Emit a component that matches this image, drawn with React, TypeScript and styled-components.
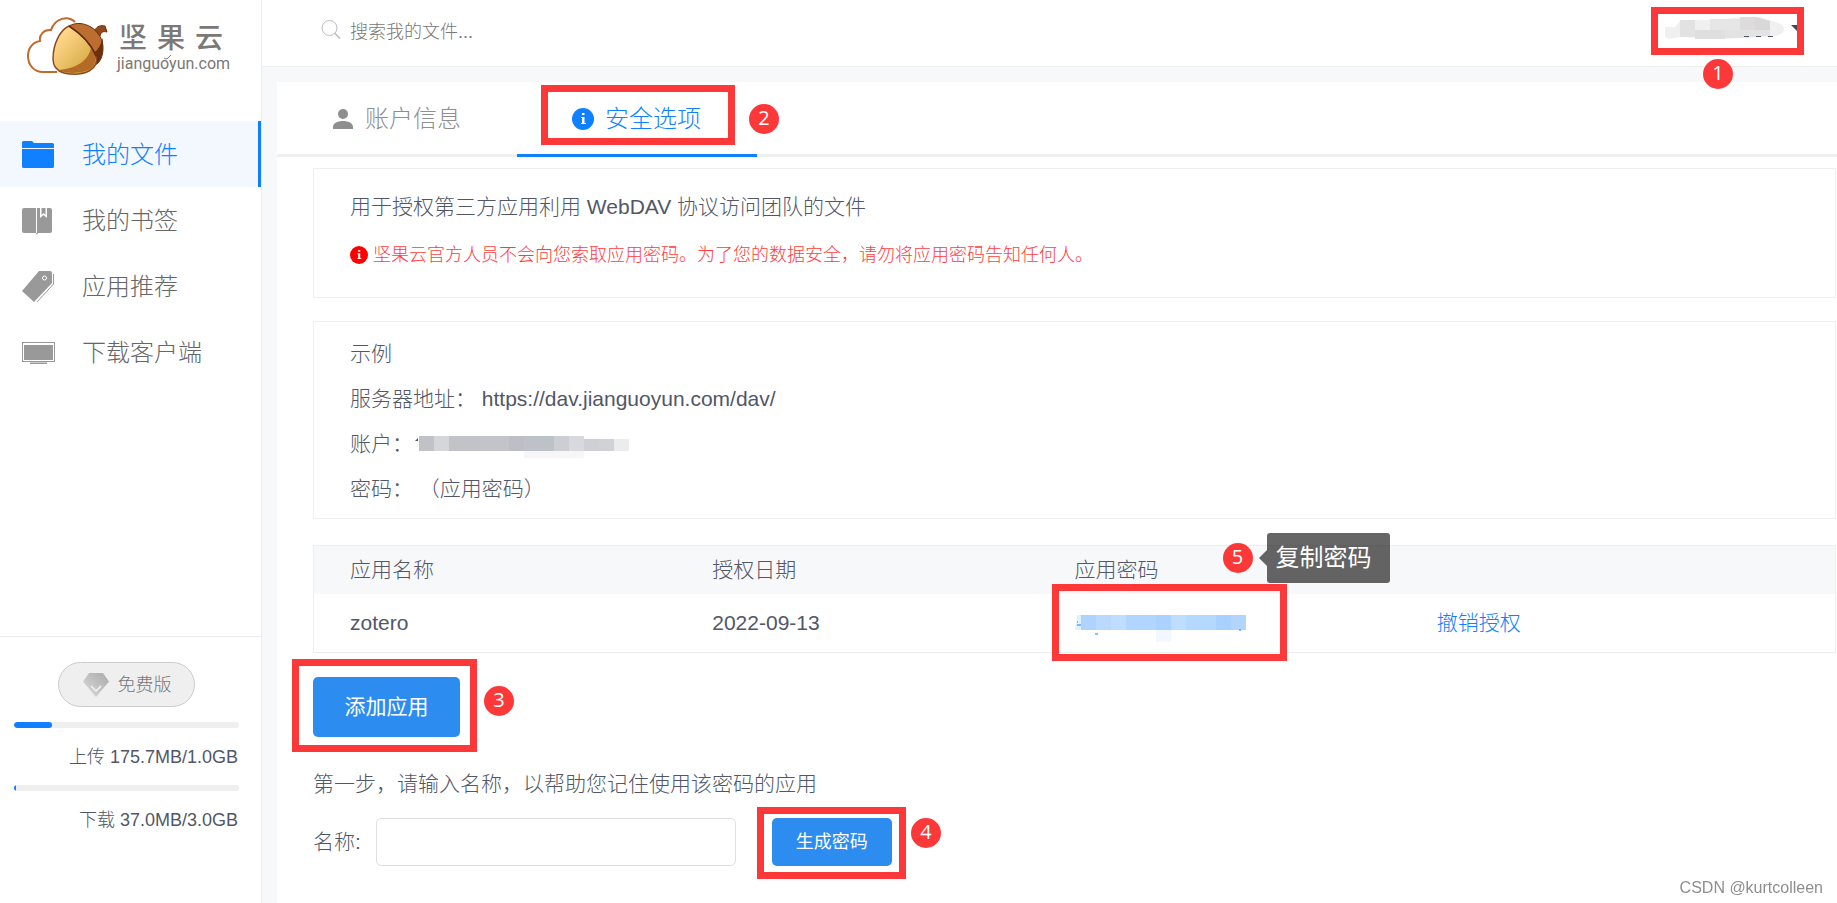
import React from "react";
import styled, { createGlobalStyle, css } from "styled-components";

const blue = "#0f80ff";
const red = "#fc3838";
const ink = "#515767";

const GlobalStyle = createGlobalStyle`
  *, *::before, *::after { box-sizing: border-box; }
  body {
    margin: 0;
    background: #fff;
    color: ${ink};
    font-family: "Liberation Sans", "Noto Sans CJK SC", sans-serif;
    font-weight: 300;
    font-size: 21px;
    line-height: 30px;
    overflow-x: hidden;
  }
  button, input { font: inherit; }
  p, ul { margin: 0; padding: 0; }
`;

const Shell = styled.div`
  display: flex;
  min-height: 100vh;
`;

const Sidebar = styled.aside`
  flex: none;
  width: 262px;
  display: flex;
  flex-direction: column;
  justify-content: space-between;
  border-right: 1px solid #ececee;
`;

const Brand = styled.a`
  display: flex;
  height: 121px;
  padding: 16px 0 0 26px;
  gap: 8px;
  color: #7b7876;
  text-decoration: none;
`;

const BrandText = styled.span`
  display: flex;
  flex-direction: column;
  padding-top: 8px;
`;

const BrandName = styled.span`
  display: flex;
  gap: 10px;
  padding-left: 2px;
  font-size: 28px;
  font-weight: 500;
  line-height: 30px;
`;

const BrandDomain = styled.span`
  position: relative;
  font-family: Roboto, sans-serif;
  font-size: 16px;
  font-weight: 400;
  line-height: 20px;
  svg {
    position: absolute;
    left: 47px;
    top: 1px;
  }
`;

const NavItem = styled.a<{ $active?: boolean }>`
  display: grid;
  grid-template-columns: 60px 1fr;
  align-items: center;
  height: 66px;
  padding: 2px 0 0 22px;
  font-size: 24px;
  text-decoration: none;
  color: ${(p) => (p.$active ? blue : "#666")};
  background: ${(p) => (p.$active ? "#f3f8ff" : "transparent")};
  border-right: 3px solid ${(p) => (p.$active ? blue : "transparent")};
`;

const Usage = styled.section`
  height: 267px;
  padding: 25px 22px 0 14px;
  border-top: 1px solid #ececee;
  font-size: 18px;
`;

const Plan = styled.button`
  display: flex;
  align-items: center;
  justify-content: center;
  gap: 8px;
  width: 137px;
  height: 45px;
  margin: 0 0 15px 44px;
  border: 1px solid #ccc;
  border-radius: 23px;
  background: #efefef;
  color: #777;
`;

const Track = styled.div`
  height: 6px;
  border-radius: 3px;
  background: #efefef;
  overflow: hidden;
`;

const Fill = styled.div`
  height: 6px;
  border-radius: 3px;
  background: ${blue};
`;

const UsageText = styled.p`
  height: 57px;
  padding: 14px 1px 0 0;
  text-align: right;
`;

const Main = styled.div`
  flex: 1;
  min-width: 0;
  display: flex;
  flex-direction: column;
  background: #f7f8fa;
`;

const TopBar = styled.header`
  display: flex;
  justify-content: space-between;
  align-items: flex-start;
  height: 67px;
  padding: 7px 33px 0 59px;
  background: #fff;
  border-bottom: 1px solid #eee;
`;

const Search = styled.label`
  display: flex;
  align-items: center;
  gap: 9px;
  height: 50px;
  svg { margin-bottom: 5px; }
`;

const SearchInput = styled.input`
  width: 300px;
  padding: 0;
  border: 0;
  outline: 0;
  background: transparent;
  font-size: 18px;
  color: #777;
  &::placeholder { color: #777; opacity: 1; }
`;

const Account = styled.button`
  position: relative;
  width: 153px;
  height: 48px;
  padding: 0 0 0 14px;
  border: 0;
  background: transparent;
  svg { display: block; }
`;

const frame = css`
  content: "";
  position: absolute;
  border: 7px solid ${red};
  pointer-events: none;
`;

const Highlight = styled.div<{ $inset: string }>`
  position: relative;
  width: fit-content;
  &::after {
    ${frame}
    inset: ${(p) => p.$inset};
  }
`;

const Step = styled.span<{ $left: string; $top: string }>`
  position: absolute;
  z-index: 2;
  left: ${(p) => p.$left};
  top: ${(p) => p.$top};
  width: 30px;
  height: 30px;
  border-radius: 50%;
  background: ${red};
  color: #fff;
  font-family: "Open Sans", sans-serif;
  font-size: 20px;
  font-weight: 400;
  line-height: 28px;
  text-align: center;
`;

const AccountFrame = styled.span`
  &::after {
    ${frame}
    inset: 0;
  }
`;

const Panel = styled.main`
  flex: 1;
  margin: 15px 0 0 15px;
  background: #fff;
`;

const Tabs = styled.nav`
  display: flex;
  height: 75px;
  box-shadow: inset 0 -3px #efefef;
`;

const Tab = styled.button<{ $active?: boolean }>`
  position: relative;
  display: flex;
  align-items: center;
  gap: 11px;
  width: 240px;
  padding: 2px 0 0 55px;
  border: 0;
  border-bottom: 3px solid ${(p) => (p.$active ? blue : "transparent")};
  background: transparent;
  font-size: 24px;
  color: ${(p) => (p.$active ? blue : "#8e8e8e")};
`;

const TabFrame = styled.span`
  &::after {
    ${frame}
    inset: 3px 22px 9px 24px;
  }
`;

const Content = styled.div`
  padding: 11px 1px 0 36px;
`;

const Card = styled.section`
  border: 1px solid #eee;
  padding: 0 36px;
`;

const Intro = styled(Card)`
  height: 130px;
  padding-top: 23px;
  margin-bottom: 23px;
`;

const Warning = styled.p`
  display: flex;
  align-items: center;
  gap: 5px;
  margin-top: 18px;
  font-size: 18px;
  color: #ff3c3c;
`;

const Example = styled(Card)`
  height: 198px;
  padding-top: 9px;
  margin-bottom: 26px;
  p {
    display: flex;
    align-items: center;
    height: 45px;
    white-space: pre;
  }
`;

const AppTable = styled.table`
  display: block;
  border: 1px solid #eee;
  thead, tbody { display: block; }
  tr {
    display: grid;
    grid-template-columns: repeat(4, 1fr);
    align-items: center;
    height: 58px;
    padding: 0 36px;
  }
  thead tr {
    height: 48px;
    background: #f7f8fa;
  }
  th, td {
    position: relative;
    padding: 0;
    font-weight: 300;
    text-align: left;
  }
`;

const PasswordFrame = styled.span`
  &::after {
    ${frame}
    width: 235px;
    height: 77px;
    left: -23px;
    top: -24px;
  }
`;

const Secret = styled.button`
  display: block;
  height: 30px;
  padding: 0;
  border: 0;
  background: transparent;
  svg { display: block; }
`;

const Revoke = styled.a`
  color: ${blue};
  text-decoration: none;
`;

const Tooltip = styled.span`
  position: absolute;
  z-index: 1;
  left: 192px;
  top: -22px;
  padding: 10px 18px 10px 9px;
  border-radius: 3px;
  background: rgba(0, 0, 0, 0.6);
  color: #fff;
  font-size: 24px;
  font-weight: 400;
  white-space: nowrap;
  &::before {
    content: "";
    position: absolute;
    right: 100%;
    top: 17px;
    border: 8px solid transparent;
    border-left: 0;
    border-right-color: rgba(0, 0, 0, 0.6);
  }
`;

const Primary = styled.button<{ $small?: boolean }>`
  display: block;
  width: ${(p) => (p.$small ? 120 : 147)}px;
  height: ${(p) => (p.$small ? 48 : 60)}px;
  padding: 0;
  border: 0;
  border-radius: 5px;
  background: #2d8cf0;
  color: #fff;
  font-size: ${(p) => (p.$small ? 18 : 21)}px;
  font-weight: 400;
`;

const AddRow = styled.div`
  padding: 24px 0 32px;
`;

const NameForm = styled.form`
  display: flex;
  align-items: center;
  margin: 19px 0 36px;
`;

const NameInput = styled.input`
  width: 360px;
  height: 48px;
  margin: 0 36px 0 15px;
  padding: 0 12px;
  border: 1px solid #dcdee2;
  border-radius: 5px;
`;

const Watermark = styled.span`
  position: fixed;
  right: 14px;
  bottom: 5px;
  font-size: 16px;
  line-height: 20px;
  color: #8e8e8e;
`;

const LogoMark = () => (
  <svg width="83" height="60" viewBox="0 0 83 60" aria-hidden="true">
    <defs>
      <linearGradient id="nut" x1="0" y1="0" x2="1" y2="1">
        <stop offset="0.2" stopColor="#ffd68a" />
        <stop offset="0.75" stopColor="#dbb04e" />
      </linearGradient>
    </defs>
    <path d="M31 56H17C8 56 2 49 2 40c0-8 5-14 12-15-1-6 4-12 11-11C29 2 42-1 49 6" fill="none" stroke="#c26a2c" strokeWidth="2" />
    <path d="M43 10C50 6 58 7 65 11c8 5 12 13 12 21 0 8-3 15-8 17L58 24Z" fill="#bd6d30" stroke="#6b300f" />
    <path d="M76.500 22C75 29 72 34 67.500 37L69 49c5-2 8-9 8-17 0-4 0-7-.5-10Z" fill="#6b300f" />
    <path d="M69 14c2-4 6-5 10-4l2 6c-4-1-6 0-7 4Z" fill="#93491c" stroke="#6b300f" />
    <path d="M43 10C34 14 27 28 27 43c0 8 4 12 11 14 9 2 19 1 25-2 7-4 9-10 6-17C64 27 54 17 43 10Z" fill="url(#nut)" stroke="#8d4a22" strokeWidth="1.500" />
    <path d="M65 31c5 7 6 16 1 21-6 5-24 7-34 2 16-1 31-8 33-23Z" fill="#b36c25" />
    <path d="M43 10C55 18 65 27 70 40" fill="none" stroke="#602a10" strokeWidth="1.500" />
  </svg>
);

const FolderIcon = () => (
  <svg width="32" height="28" viewBox="0 0 32 28" aria-hidden="true">
    <path d="M0 7V1.500Q0 0 1.500 0H10l2 2H30.500Q32 2 32 3.500V7ZM0 8H32V25.500Q32 27 30.500 27H1.500Q0 27 0 25.500Z" fill={blue} />
  </svg>
);

const BookIcon = () => (
  <svg width="32" height="28" viewBox="0 0 32 28" aria-hidden="true">
    <path d="M2 1H14V26H2Q0 26 0 24V3Q0 1 2 1ZM16 1h2v10l3.500-3 3.500 3V1h3q2 0 2 2V24q0 2-2 2H16l-1 2-1-2h1V1Z" fill="#999" />
    <path d="M19.500 1h4v7l-2-2-2 2Z" fill="#999" />
  </svg>
);

const TagIcon = () => (
  <svg width="32" height="32" viewBox="0 0 32 32" aria-hidden="true">
    <path d="M17 0H28Q30 0 30 2V12L12 31 0 20Z" fill="#999" />
    <path d="M31.500 3V13L15 31" fill="none" stroke="#999" />
    <circle cx="22.500" cy="7" r="2" fill="none" stroke="#fff" />
  </svg>
);

const ScreenIcon = () => (
  <svg width="33" height="22" viewBox="0 0 33 22" aria-hidden="true">
    <rect x="0.500" y="0.500" width="32" height="19" fill="none" stroke="#999" />
    <path d="M2 3H31V18H2ZM8 20.500h17v1.500H8Z" fill="#999" />
  </svg>
);

const GemIcon = () => (
  <svg width="28" height="26" viewBox="0 0 28 26" aria-hidden="true">
    <defs>
      <linearGradient id="gem" x1="0" y1="1" x2="1" y2="0">
        <stop offset="0.2" stopColor="#d2d2d2" />
        <stop offset="0.8" stopColor="#b3b3b3" />
      </linearGradient>
    </defs>
    <path d="M7 1H21L27 9.500 14 25 1 9.500Z" fill="url(#gem)" />
    <path d="M9 14l5 5 5-5" fill="none" stroke="#f5f5f5" strokeWidth="1.500" />
  </svg>
);

const SearchIcon = () => (
  <svg width="20" height="20" viewBox="0 0 20 20" fill="none" stroke="#bbb" aria-hidden="true">
    <circle cx="8.500" cy="8" r="7.500" />
    <path d="M13.500 13l5.500 5.500" strokeWidth="1.500" />
  </svg>
);

const UserIcon = () => (
  <svg width="22" height="22" viewBox="0 0 22 22" fill="currentColor" aria-hidden="true">
    <circle cx="11" cy="6" r="5" />
    <path d="M1 21v-2c0-4 5-6 10-6s10 2 10 6v2Z" />
  </svg>
);

const InfoIcon = ({ size, color }: { size: number; color: string }) => (
  <svg width={size} height={size} viewBox="0 0 22 22" aria-hidden="true">
    <circle cx="11" cy="11" r="11" fill={color} />
    <path d="M10 5h2.500v2H10ZM9 9h3.500v6H14v1H9v-1h1v-5H9Z" fill="#fff" />
  </svg>
);

const AccountMask = () => (
  <svg width="139" height="34" viewBox="0 -3 139 34" aria-hidden="true">
    <path d="M0 10H10L15 4 60 2 80 0H95L110 5q9 2 9 7t-9 7L60 22 15 20 4 22 0 20Z" fill="#f0f0f0" />
    <path d="M15 3H30V20H15Z" fill="#e2e2e2" />
    <path d="M45 2H75V13H45Z" fill="#e6e6e6" />
    <path d="M75 0H90V13H75Z" fill="#dddbdb" />
    <path d="M90 0l15 4v9H90Z" fill="#d8d8d8" />
    <path d="M30 13H60V22H30Z" fill="#dfdfdf" />
    <path d="M60 13H105v6L75 21H60Z" fill="#e3e3e3" />
    <path d="M79 19.500h5M91 19.500h5M103 19.500h5" stroke={ink} />
    <path d="M126 8h12v8h-4Z" fill="#44495a" />
  </svg>
);

const accountCells = ["#c1c2c8", "#d5d6da", "#c2c3c8", "#c2c3c9", "#c3c4c9", "#c3c4ca", "#bdbfc6", "#bec1c7", "#bdc2c7", "#cdced3", "#d8d9de", "#cfd0d5", "#d1d2d7", "#ebecee"];

const LoginMask = () => (
  <svg width="220" height="28" viewBox="-2 -5 220 28" aria-hidden="true">
    <path d="M0 6l3-3v3Z" fill={ink} />
    <path d="M4 12v4h1v-4Z" fill={ink} />
    {accountCells.map((c, i) => (
      <rect key={i} x={4 + i * 15} y={i > 10 ? 4 : 1} width="15" height={i > 10 ? 12 : 15} fill={c} />
    ))}
    <path d="M109 16h60v6l-6 3H125l-16-2Z" fill="#f6f6f7" />
  </svg>
);

const passwordCells = ["#afd3ff", "#b9dafe", "#bfddff", "#b1d5ff", "#b1d5ff", "#aad1ff", "#bfddff", "#b5d8ff", "#b5d8ff", "#a9d1ff", "#b1d5ff"];

const PasswordMask = () => (
  <svg width="172" height="30" viewBox="0 -6 172 30" overflow="visible" aria-hidden="true">
    <path d="M2 1H6V16H0Z" fill="#e3f1ff" />
    {passwordCells.map((c, i) => (
      <rect key={i} x={6 + i * 15} y="1" width="15" height="15" fill={c} />
    ))}
    <path d="M81 16h15v12H81Z" fill="#f1f8ff" />
    <path d="M2 8h1M2 11h4M20 20h3M164 16h2" stroke={blue} />
  </svg>
);

const navItems = [
  { label: "我的文件", icon: <FolderIcon />, active: true },
  { label: "我的书签", icon: <BookIcon /> },
  { label: "应用推荐", icon: <TagIcon /> },
  { label: "下载客户端", icon: <ScreenIcon /> },
];

const usage = [
  { text: "上传 175.7MB/1.0GB", share: 17 },
  { text: "下载 37.0MB/3.0GB", share: 1 },
];

export default function App() {
  return (
    <>
      <GlobalStyle />
      <Shell>
        <Sidebar>
          <div>
            <Brand href="#">
              <LogoMark />
              <BrandText>
                <BrandName>
                  <span>坚</span>
                  <span>果</span>
                  <span>云</span>
                </BrandName>
                <BrandDomain>
                  jianguoyun.com
                  <svg width="8" height="5" viewBox="0 0 8 5" fill="none" stroke="currentColor" aria-hidden="true">
                    <path d="M0 3q2 2 4 0l3-3" />
                  </svg>
                </BrandDomain>
              </BrandText>
            </Brand>
            <nav>
              {navItems.map((item) => (
                <NavItem key={item.label} href="#" $active={item.active}>
                  {item.icon}
                  <span>{item.label}</span>
                </NavItem>
              ))}
            </nav>
          </div>
          <Usage>
            <Plan type="button">
              <GemIcon />
              免费版
            </Plan>
            {usage.map((u) => (
              <React.Fragment key={u.text}>
                <Track>
                  <Fill style={{ width: `${u.share}%` }} />
                </Track>
                <UsageText>{u.text}</UsageText>
              </React.Fragment>
            ))}
          </Usage>
        </Sidebar>
        <Main>
          <TopBar>
            <Search>
              <SearchIcon />
              <SearchInput type="text" aria-label="搜索我的文件" placeholder="搜索我的文件..." />
            </Search>
            <Account type="button" aria-label="账户">
              <AccountMask />
              <AccountFrame />
              <Step $left="52px" $top="52px">1</Step>
            </Account>
          </TopBar>
          <Panel>
            <Tabs>
              <Tab type="button">
                <UserIcon />
                账户信息
              </Tab>
              <Tab type="button" $active>
                <InfoIcon size={22} color={blue} />
                安全选项
                <TabFrame />
                <Step $left="232px" $top="22px">2</Step>
              </Tab>
            </Tabs>
            <Content>
              <Intro>
                <p>用于授权第三方应用利用 WebDAV 协议访问团队的文件</p>
                <Warning>
                  <InfoIcon size={18} color="#ff0000" />
                  坚果云官方人员不会向您索取应用密码。为了您的数据安全，请勿将应用密码告知任何人。
                </Warning>
              </Intro>
              <Example>
                <p>示例</p>
                <p>服务器地址： https://dav.jianguoyun.com/dav/</p>
                <p>账户：<LoginMask /></p>
                <p>密码： （应用密码）</p>
              </Example>
              <AppTable>
                <thead>
                  <tr>
                    <th>应用名称</th>
                    <th>授权日期</th>
                    <th>
                      应用密码
                      <Step $left="148px" $top="-12px">5</Step>
                      <Tooltip role="tooltip">复制密码</Tooltip>
                    </th>
                    <th aria-label="操作" />
                  </tr>
                </thead>
                <tbody>
                  <tr>
                    <td>zotero</td>
                    <td>2022-09-13</td>
                    <td>
                      <Secret type="button" aria-label="复制密码">
                        <PasswordMask />
                      </Secret>
                      <PasswordFrame />
                    </td>
                    <td>
                      <Revoke href="#">撤销授权</Revoke>
                    </td>
                  </tr>
                </tbody>
              </AppTable>
              <AddRow>
                <Highlight $inset="-18px -17px -15px -21px">
                  <Primary type="button">添加应用</Primary>
                  <Step $left="171px" $top="9px">3</Step>
                </Highlight>
              </AddRow>
              <p>第一步，请输入名称，以帮助您记住使用该密码的应用</p>
              <NameForm>
                <label htmlFor="app-name">名称:</label>
                <NameInput id="app-name" type="text" />
                <Highlight $inset="-11px -14px -13px -15px">
                  <Primary type="button" $small>生成密码</Primary>
                  <Step $left="139px" $top="0">4</Step>
                </Highlight>
              </NameForm>
            </Content>
          </Panel>
        </Main>
      </Shell>
      <Watermark>CSDN @kurtcolleen</Watermark>
    </>
  );
}
